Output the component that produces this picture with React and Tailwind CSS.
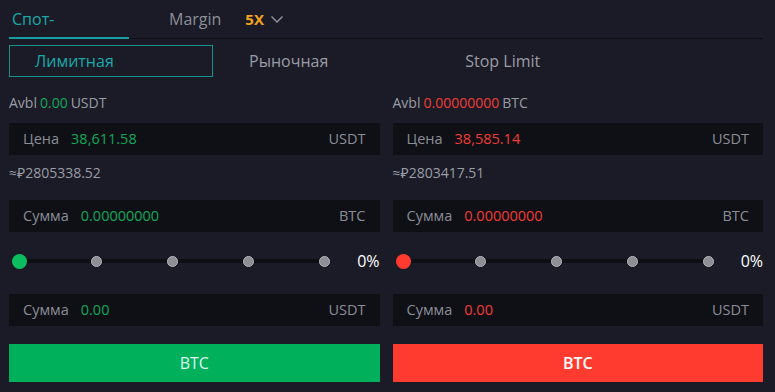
import React from 'react';

const FONT = { fontFamily: '"Open Sans", "Noto Sans", "Liberation Sans", sans-serif' };

function Field({ label, value, unit, tone }) {
  return (
    <div className="h-[32px] bg-[#0f1016] flex items-center px-[14px] text-[14.5px]">
      <span className="text-[#8b8d96]">{label}</span>
      <span className={`ml-[12px] ${tone === 'buy' ? 'text-[#10a85a]' : 'text-[#f23b35]'}`}>{value}</span>
      <span className="ml-auto text-[#8b8d96]">{unit}</span>
    </div>
  );
}

function Slider({ tone }) {
  return (
    <div className="h-[20px] flex items-center">
      <div className="relative w-[322px] h-[14px] ml-[3px]">
        <div className="absolute left-[8px] right-[6px] top-[5px] h-[4px] bg-[#0e0f15]" />
        <div className={`absolute left-0 top-0 w-[15px] h-[15px] rounded-full ${tone === 'buy' ? 'bg-[#0bbd5e]' : 'bg-[#ff3b30]'}`} />
        {[84, 160, 236, 312].map((x) => (
          <div key={x} className="absolute top-[2px] w-[11px] h-[11px] rounded-full bg-[#8e8f94] border border-[#b5b6ba]" style={{ left: x - 5 }} />
        ))}
      </div>
      <span className="ml-auto text-[16px] text-white">0%</span>
    </div>
  );
}

function Column({ tone, avbl, avblUnit, price, approx, amountUnit }) {
  const buy = tone === 'buy';
  return (
    <div className="flex-1 flex flex-col">
      <div className="h-[20px] flex items-center text-[14px] text-[#9a9ca5] mt-[15px]">
        <span>Avbl</span>
        <span className={`ml-[3px] ${buy ? 'text-[#10a85a]' : 'text-[#f23b35]'}`}>{avbl}</span>
        <span className="ml-[3px]">{avblUnit}</span>
      </div>
      <div className="mt-[11px]"><Field label="Цена" value={price} unit="USDT" tone={tone} /></div>
      <div className="h-[20px] mt-[7px] flex items-center text-[14px] text-[#9a9ca5]">{approx}</div>
      <div className="mt-[18px]"><Field label="Сумма" value="0.00000000" unit={amountUnit} tone={tone} /></div>
      <div className="mt-[19px]"><Slider tone={tone} /></div>
      <div className="mt-[23px]"><Field label="Сумма" value="0.00" unit="USDT" tone={tone} /></div>
      <button className={`mt-[18px] h-[38px] w-full text-[16px] ${buy ? 'bg-[#00b05a] text-[#dff9f2]' : 'bg-[#ff3b30] text-white font-semibold'}`}>
        BTC
      </button>
    </div>
  );
}

export default function App() {
  return (
    <div className="w-[775px] h-[392px] bg-[#1a1b26] overflow-hidden pl-[9px] pr-[12px]" style={FONT}>
      {/* top tabs */}
      <div className="h-[39px] flex items-end border-b border-[#0d0e14]">
        <div className="w-[120px] h-full flex items-center border-b-2 border-[#159e9e] -mb-[1px] text-[16px] text-[#1aa9a8] pl-[3px]">
          Спот-
        </div>
        <div className="h-full flex items-center ml-[40px] text-[16px] text-[#8d8f98]">Margin</div>
        <div className="h-full flex items-center ml-[24px] text-[15px] font-bold text-[#f5a21c]">5X</div>
        <svg className="ml-[6px] self-center" width="14" height="10" viewBox="0 0 14 10">
          <path d="M1.5 2.5 L7 8 L12.5 2.5" fill="none" stroke="#8d8f98" strokeWidth="1.5" />
        </svg>
      </div>
      {/* order types */}
      <div className="mt-[6px] h-[32px] flex items-center text-[16px]">
        <div className="w-[204px] h-full border border-[#178f8f] flex items-center pl-[25px] text-[#1aa9a8]">Лимитная</div>
        <div className="ml-[36px] text-[#9a9ca5]">Рыночная</div>
        <div className="ml-[137px] text-[#9a9ca5]">Stop Limit</div>
      </div>
      <div className="flex gap-[13px]">
        <Column tone="buy" avbl="0.00" avblUnit="USDT" price="38,611.58" approx="≈₽2805338.52" amountUnit="BTC" />
        <Column tone="sell" avbl="0.00000000" avblUnit="BTC" price="38,585.14" approx="≈₽2803417.51" amountUnit="BTC" />
      </div>
    </div>
  );
}
